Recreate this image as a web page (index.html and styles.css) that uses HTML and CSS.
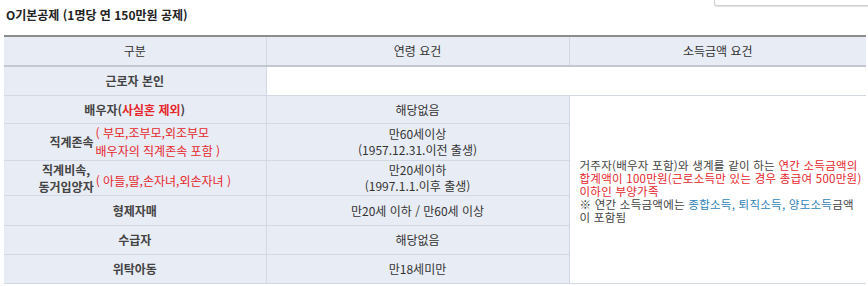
FILE: index.html
```html
<!DOCTYPE html>
<html lang="ko">
<head>
<meta charset="utf-8">
<link rel="stylesheet" href="styles.css">
</head>
<body>
<div class="topbox"></div>
<div class="title">O기본공제 (1명당 연 150만원 공제)</div>
<table class="tbl">
  <colgroup>
    <col class="c1"><col class="c2"><col class="c3">
  </colgroup>
  <thead>
    <tr class="h"><th>구분</th><th>연령 요건</th><th>소득금액 요건</th></tr>
  </thead>
  <tbody>
    <tr class="r1"><td class="lab">근로자 본인</td><td colspan="2" class="blank"></td></tr>
    <tr class="r2"><td class="lab">배우자(<span class="red">사실혼 제외</span>)</td><td>해당없음</td>
      <td rowspan="6" class="income"><span class="ln">거주자(배우자 포함)와 생계를 같이 하는 <span class="red2">연간 소득금액의</span></span><span class="ln red2">합계액이 100만원(근로소득만 있는 경우 총급여 500만원)</span><span class="ln red2">이하인 부양가족</span><span class="ln">※ 연간 소득금액에는 <span class="blue">종합소득, 퇴직소득, 양도소득</span>금액</span><span class="ln">이 포함됨</span></td></tr>
    <tr class="r3"><td class="lab"><span class="combo"><span>직계존속</span><span class="red note">( 부모,조부모,외조부모<br>배우자의 직계존속 포함 )</span></span></td><td class="two">만60세이상<br>(1957.12.31.이전 출생)</td></tr>
    <tr class="r4"><td class="lab"><span class="combo"><span class="lab2">직계비속,<br>동거입양자</span><span class="red note n2">( 아들,딸,손자녀,외손자녀 )</span></span></td><td class="two">만20세이하<br>(1997.1.1.이후 출생)</td></tr>
    <tr class="r5"><td class="lab">형제자매</td><td>만20세 이하 / 만60세 이상</td></tr>
    <tr class="r6"><td class="lab">수급자</td><td>해당없음</td></tr>
    <tr class="r7"><td class="lab">위탁아동</td><td>만18세미만</td></tr>
  </tbody>
</table>
</body>
</html>
```
FILE: styles.css
```css
html, body {
  margin: 0;
  padding: 0;
  background: #fff;
}
body {
  font-family: "Noto Sans CJK KR", "Noto Sans", sans-serif;
  font-size: 12px;
  color: #333;
  position: relative;
  width: 868px;
  height: 286px;
  overflow: hidden;
}
.topbox {
  position: absolute;
  left: 714px;
  top: -6px;
  width: 170px;
  height: 10px;
  border: 1px solid #cfcfcf;
  border-radius: 3px;
  box-shadow: 0 1px 1px #e0e0e0;
  background: #fff;
}
.title {
  padding: 6px 0 0 6px;
  height: 29px;
  line-height: 18px;
  font-weight: 700;
  color: #222;
  font-size: 12px;
}
.tbl {
  margin-left: 4px;
  width: 862px;
  border-collapse: collapse;
  table-layout: fixed;
  border-top: 2px solid #8c8c8c;
}
.c1 { width: 262px; }
.c2 { width: 303px; }
.c3 { width: 297px; }
.tbl th, .tbl td {
  border: 1px solid #d3d9e4;
  background: #e8ecf5;
  text-align: center;
  vertical-align: middle;
  padding: 0;
  line-height: 16px;
}
.tbl th {
  font-weight: 400;
  color: #333;
  height: 28px;
  border-top: none;
  border-bottom: 2px solid #c3c7cf;
}
.tbl tr > :first-child { border-left: none; }
.tbl tr > :last-child { border-right: none; }
.tbl td.lab { font-weight: 700; color: #444; }
.tbl td.blank { background: #fff; }
.tbl td.income {
  background: #fff;
  text-align: left;
  padding: 4px 0 0 10px;
  font-size: 11.5px;
  letter-spacing: 0.25px;
  line-height: 13px;
  color: #444;
}
.ln {
  display: block;
  white-space: nowrap;
}
.r1 td { height: 28px; }
.r2 td { height: 27px; }
.r3 td { height: 35px; }
.r4 td { height: 34px; }
.r5 td { height: 29px; }
.r6 td { height: 28px; }
.r7 td { height: 28px; }
.red { color: #e5262b; font-weight: 700; }
.red2 { color: #e5262b; }
.blue { color: #2f7fb8; }
.combo {
  display: inline-flex;
  align-items: center;
  gap: 2px;
}
.lab2 { line-height: 17px; }
.note {
  text-align: left;
  line-height: 18px;
  font-weight: 400;
}
.n2 { padding-top: 6px; }
```
